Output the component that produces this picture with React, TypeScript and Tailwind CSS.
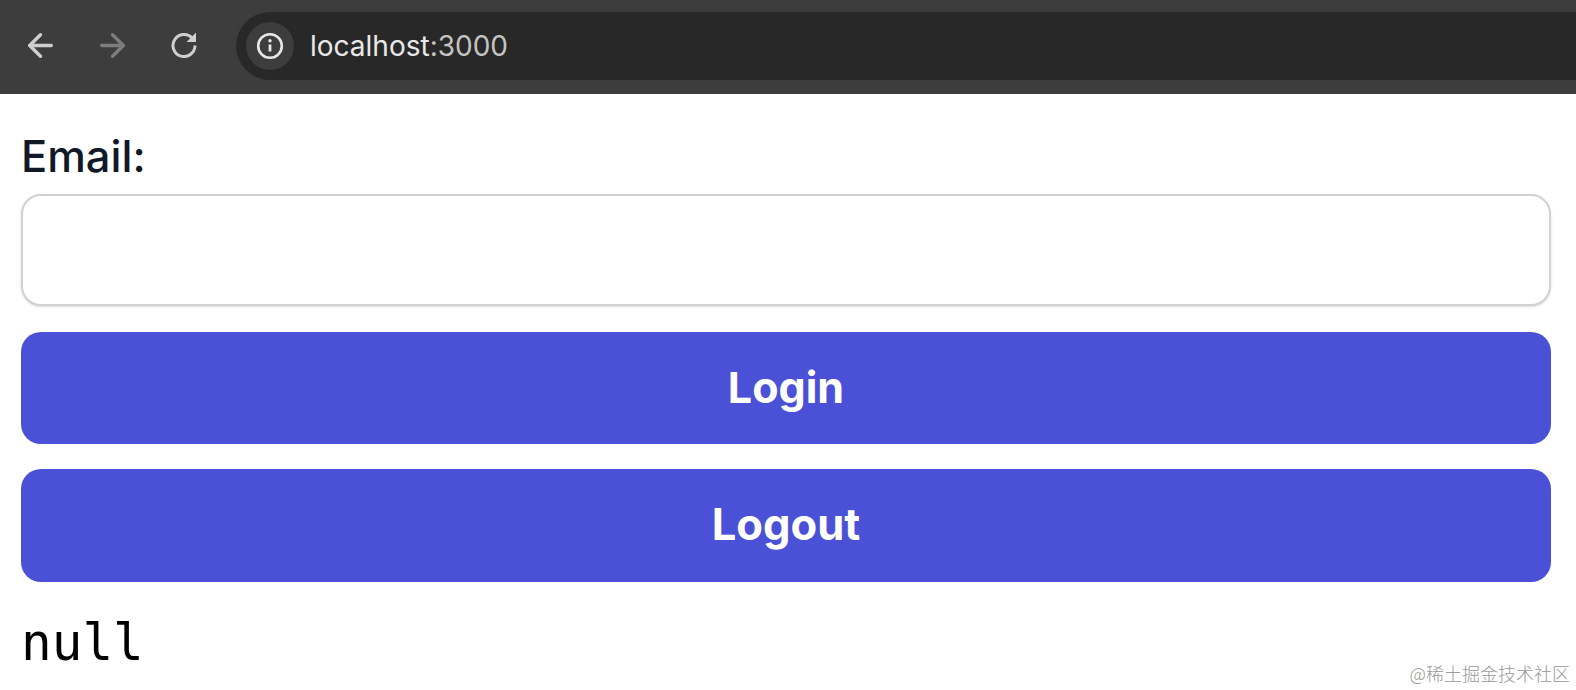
import { ArrowLeft, ArrowRight } from "lucide-react";

function InfoIcon() {
  return (
    <svg width="28" height="28" viewBox="0 0 28 28" fill="none" stroke="#e8e8e8">
      <circle cx="14" cy="14" r="11.8" strokeWidth="2.6" />
      <path d="M14 12.5v7" strokeWidth="2.8" />
      <circle cx="14" cy="8.8" r="1.7" fill="#e8e8e8" stroke="none" />
    </svg>
  );
}

function ReloadIcon() {
  return (
    <svg width="28" height="28" viewBox="0 0 28 28" fill="none" className="mb-[3px] ml-[39px]">
      <path d="M22.2 8.2A11 11 0 1 0 25 15.5" stroke="#cfcfcf" strokeWidth="3" />
      <path d="M26 2.5V12H16.5Z" fill="#cfcfcf" />
    </svg>
  );
}

function BrowserBar() {
  return (
    <div className="flex h-[94px] items-start bg-[#3d3d3d] pt-[12px]">
      <div className="flex h-[68px] w-[236px] shrink-0 items-center pl-[22px] pb-[1px]">
        <ArrowLeft size={37} strokeWidth={2.2} className="text-[#cfcfcf]" />
        <ArrowRight size={37} strokeWidth={2.2} className="ml-[35px] text-[#7d7d7d]" />
        <ReloadIcon />
      </div>
      <div className="flex h-[68px] flex-1 items-center rounded-l-[34px] bg-[#282828] pl-[10px]">
        <div className="flex h-[48px] w-[48px] items-center justify-center rounded-full bg-[#3d3d3d]">
          <InfoIcon />
        </div>
        <span className="ml-[16px] text-[28px] text-[#e8e8e8]">
          localhost<span className="text-[#c4c4c4]">:3000</span>
        </span>
      </div>
    </div>
  );
}

export default function App() {
  return (
    <div className="relative h-[690px] overflow-hidden bg-white font-['Inter',sans-serif]">
      <BrowserBar />
      <div className="pr-[25px] pl-[21px] pt-[32px]">
        <label className="block text-[43.5px] leading-[60px] font-[550] text-[#111827]">Email:</label>
        <input
          type="text"
          className="mt-[8px] block h-[112px] w-full rounded-[20px] border-[2.5px] border-[#d1d1d4] bg-white shadow-sm"
        />
        <button
          type="button"
          className="mt-[26px] block h-[112px] w-full rounded-[20px] bg-[#4b51d6] pb-[1px] text-[43px] font-bold text-white"
        >
          Login
        </button>
        <button
          type="button"
          className="mt-[25px] block h-[113px] w-full rounded-[20px] bg-[#4b51d6] pb-[1px] text-[43.5px] font-bold text-white"
        >
          Logout
        </button>
        <pre className="mt-[31px] font-['DejaVu_Sans_Mono',monospace] text-[51px] leading-[60px] text-black">null</pre>
      </div>
      <span className="absolute right-[6px] bottom-[3px] font-['Noto_Sans_CJK_SC',sans-serif] text-[18px] font-light text-[#999999]">
        @稀土掘金技术社区
      </span>
    </div>
  );
}
